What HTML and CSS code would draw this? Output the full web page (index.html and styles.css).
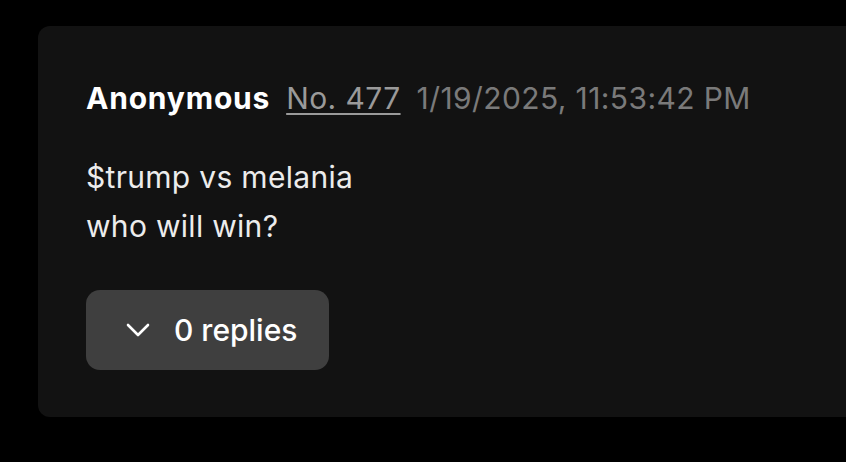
FILE: index.html
```html
<!DOCTYPE html>
<html lang="en">
<head>
  <meta charset="UTF-8">
  <meta name="viewport" content="width=device-width, initial-scale=1.0">
  <title>Thread</title>
  <link rel="stylesheet" href="styles.css">
</head>
<body>
  <!-- Post -->
  <article class="post">
    <header class="post-head">
      <span class="author">Anonymous</span>
      <a class="post-no" href="#">No. 477</a>
      <time class="post-date">1/19/2025, 11:53:42 PM</time>
    </header>

    <div class="post-body">
      <p>$trump vs melania</p>
      <p>who will win?</p>
    </div>

    <!-- Respuestas -->
    <button class="replies-btn" type="button">
      <svg class="chevron" width="24" height="14" viewBox="0 0 24 14" fill="none" stroke="currentColor" stroke-width="2.6" stroke-linecap="round" stroke-linejoin="round">
        <path d="M2 2l10 10 10-10"/>
      </svg>
      <span>0 replies</span>
    </button>
  </article>
</body>
</html>
```

FILE: styles.css
```css
body {
  margin: 0;
  padding: 26px 0 0 38px;
  background: #000;
  font-family: Inter, "Noto Sans", sans-serif;
  overflow: hidden;
}

/* Tarjeta del post */
.post {
  background: #121212;
  border-radius: 12px 0 0 12px;
  padding: 48px 48px 47px 48px;
}

.post-head {
  display: flex;
  align-items: baseline;
  gap: 16px;
  font-size: 30px;
  line-height: 49px;
  letter-spacing: 0.4px;
}

.author {
  color: #fff;
  font-weight: 700;
  letter-spacing: 0.8px;
}

.post-no {
  color: #9a9a9a;
  text-decoration: underline;
  text-underline-offset: 4px;
  text-decoration-thickness: 2px;
}

.post-date {
  color: #7a7a7a;
}

.post-body {
  margin-top: 30px;
  color: #ececec;
  font-size: 30px;
  line-height: 49px;
  letter-spacing: 0.3px;
}

.post-body p {
  margin: 0;
}

/* Boton de respuestas */
.replies-btn {
  margin-top: 39px;
  display: flex;
  align-items: center;
  gap: 24px;
  height: 80px;
  padding: 0 32px 0 40px;
  background: #3f3f3f;
  border: none;
  border-radius: 14px;
  color: #fff;
  font-family: inherit;
  font-size: 30px;
  font-weight: 500;
  cursor: pointer;
}

.chevron {
  width: 24px;
  height: 14px;
}
```
